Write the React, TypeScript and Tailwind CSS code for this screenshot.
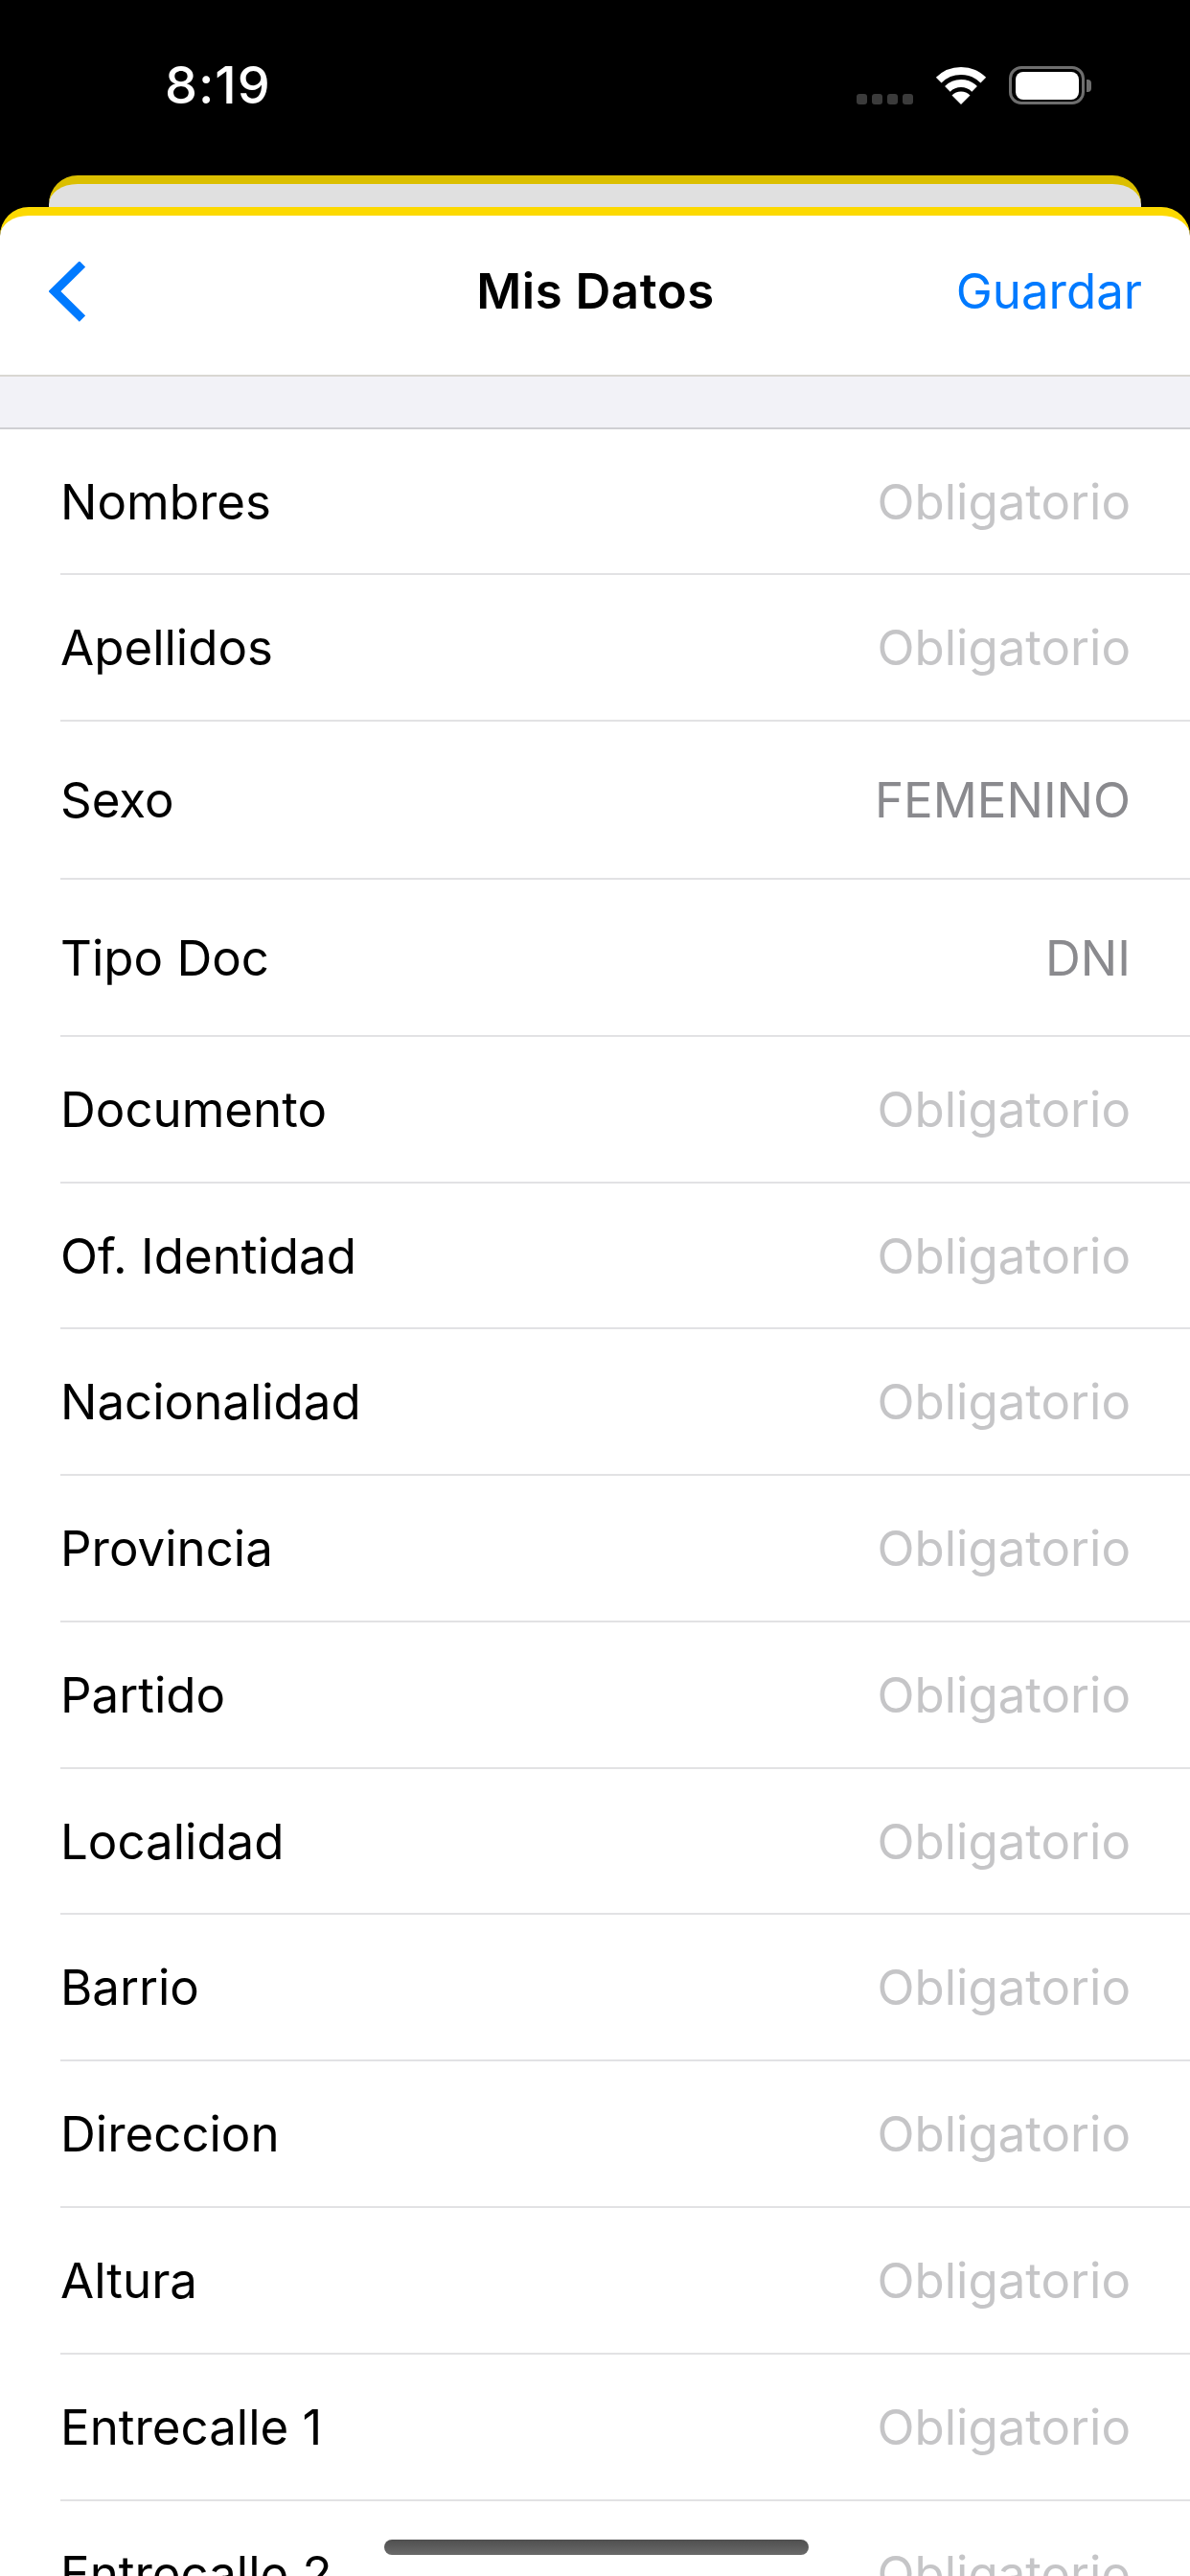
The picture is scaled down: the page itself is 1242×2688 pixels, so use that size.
const rows = [
  { label: 'Nombres', h: 'h-[152px]' },
  { label: 'Apellidos', h: 'h-[153px]' },
  { label: 'Sexo', value: 'FEMENINO', h: 'h-[165px]' },
  { label: 'Tipo Doc', value: 'DNI', h: 'h-[164px]' },
  { label: 'Documento', h: 'h-[153px]' },
  { label: 'Of. Identidad', h: 'h-[152px]' },
  { label: 'Nacionalidad', h: 'h-[153px]' },
  { label: 'Provincia', h: 'h-[153px]' },
  { label: 'Partido', h: 'h-[153px]' },
  { label: 'Localidad', h: 'h-[152px]' },
  { label: 'Barrio', h: 'h-[153px]' },
  { label: 'Direccion', h: 'h-[153px]' },
  { label: 'Altura', h: 'h-[153px]' },
  { label: 'Entrecalle 1', h: 'h-[153px]' },
  { label: 'Entrecalle 2', h: 'h-[153px]' },
];

function StatusBar() {
  return (
    <div className="flex h-[183px] items-start justify-between pl-[172px] pr-[103px] pt-[69px]">
      <span className="text-[54px] leading-[40px] font-medium tracking-[1px] text-white">8:19</span>
      <div className="flex h-[40px] items-end">
        <div className="mr-[23px] flex gap-[5px]">
          <span className="h-[11px] w-[11px] rounded-[3px] bg-[#3b3b3b]" />
          <span className="h-[11px] w-[11px] rounded-[3px] bg-[#3b3b3b]" />
          <span className="h-[11px] w-[11px] rounded-[3px] bg-[#3b3b3b]" />
          <span className="h-[11px] w-[11px] rounded-[3px] bg-[#3b3b3b]" />
        </div>
        <svg width="54" height="40" viewBox="0 0 54 40" className="mr-[23px]">
          <path d="M3.7 14.7A33 33 0 0 1 50.3 14.7" fill="none" stroke="#fff" strokeWidth="8" />
          <path d="M12.9 23.9A20 20 0 0 1 41.1 23.9" fill="none" stroke="#fff" strokeWidth="8" />
          <path d="M27 40L17.5 30.5A13.4 13.4 0 0 1 36.5 30.5Z" fill="#fff" />
        </svg>
        <div className="flex h-[40px] w-[79px] items-center justify-center rounded-[13px] border-[3px] border-[#6e6e6e]">
          <div className="h-[29px] w-[66px] rounded-[8px] bg-white" />
        </div>
        <div className="mb-[13px] ml-[2px] h-[13px] w-[5px] rounded-r-[4px] bg-[#6e6e6e]" />
      </div>
    </div>
  );
}

function Row({ label, value, h }: { label: string; value?: string; h: string }) {
  return (
    <div className={`${h} pl-[63px]`}>
      <div className="flex h-full items-center justify-between border-b-2 border-[#e2e2e4] pr-[62px] pt-[2px] text-[51px]">
        <span className="text-black">{label}</span>
        <span className={value ? 'text-[#8a8a8e]' : 'text-[#c5c5c7]'}>{value ?? 'Obligatorio'}</span>
      </div>
    </div>
  );
}

export default function App() {
  return (
    <div className="relative h-[2688px] w-[1242px] overflow-hidden bg-black font-['Inter',sans-serif]">
      <StatusBar />
      {/* card behind */}
      <div className="mx-[51px] h-[33px] rounded-t-[30px] border-t-[9px] border-[#dbbf00] bg-[#e0e0e0]" />
      {/* front card */}
      <div className="h-[2472px] rounded-t-[30px] border-t-[9px] border-[#fcd900] bg-white">
        <div className="grid h-[168px] grid-cols-[1fr_auto_1fr] items-center border-b-2 border-[#d9d7d2] pb-[8px] pl-[51px] pr-[50px]">
          <svg width="38" height="63" viewBox="0 0 38 63" fill="none">
            <path d="M35 2.5L6 31L35 59.5" stroke="#007aff" strokeWidth="9" />
          </svg>
          <span className="text-[51px] font-semibold tracking-[0.5px] text-black">Mis Datos</span>
          <span className="justify-self-end text-[51px] text-[#007aff]">Guardar</span>
        </div>
        <div className="h-[55px] border-b-2 border-[#cfcfd3] bg-[#f2f2f7]" />
        {rows.map((row) => (
          <Row key={row.label} {...row} />
        ))}
      </div>
      <div className="absolute left-[401px] top-[2650px] h-[16px] w-[443px] rounded-full bg-gradient-to-b from-[#4f4f4f] to-[#6a6a6a]" />
    </div>
  );
}
